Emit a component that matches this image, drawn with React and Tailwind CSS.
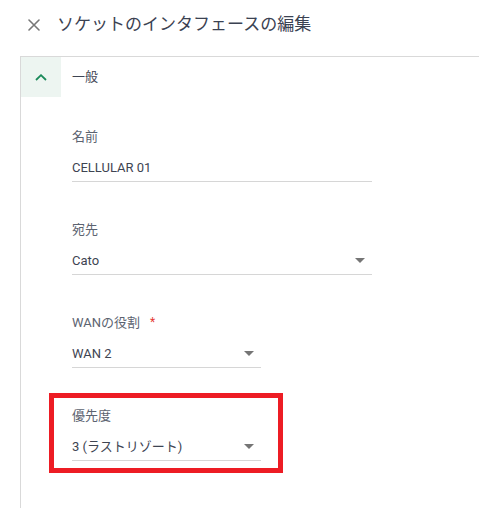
import React from 'react'

const FONT = "font-['Roboto','Noto_Sans_CJK_JP',sans-serif]"

const Caret = () => (
  <svg width="10" height="5" viewBox="0 0 10 5" className="shrink-0">
    <polygon points="0,0 10,0 5,5" fill="#757575" />
  </svg>
)

const Field = ({ label, value, required, select, width = 'w-[300px]' }) => (
  <div className={width}>
    <div className="flex items-center h-[18px] text-[13px] leading-[18px] text-[#5c6370]">
      <span>{label}</span>
      {required && <span className="ml-[10px] -mt-[3px] text-[12px] text-[#e53935]">*</span>}
    </div>
    <div className="flex items-center justify-between pt-[13px] pb-[4px] border-b border-[#d6d6d6]">
      <span className="text-[13px] leading-[18px] text-[#3e4452]">{value}</span>
      {select && <span className="pr-[7px] pb-[1px]"><Caret /></span>}
    </div>
  </div>
)

export default function App() {
  return (
    <div className={`w-[479px] h-[508px] bg-white overflow-hidden flex flex-col ${FONT}`}>
      <div className="flex items-center h-[50px] mb-[6px] pl-[28px]">
        <svg width="12" height="12" viewBox="0 0 12 12" className="shrink-0">
          <path d="M1 1L11 11M11 1L1 11" stroke="#777" strokeWidth="1.6" strokeLinecap="round" />
        </svg>
        <h1 className="ml-[17px] text-[17px] text-[#3b4252]">ソケットのインタフェースの編集</h1>
      </div>

      <div className="flex-1 ml-[20px] border-l border-t border-[#d9d9d9]">
        <div className="flex items-center h-[40px]">
          <div className="w-[40px] h-[40px] bg-[#edf5f1] flex items-center justify-center">
            <svg width="12" height="7" viewBox="0 0 12 7">
              <path d="M1 6L6 1.2L11 6" stroke="#1b8a5a" strokeWidth="1.8" fill="none" />
            </svg>
          </div>
          <span className="ml-[11px] text-[13px] text-[#3e4452]">一般</span>
        </div>

        <div className="flex flex-col pl-[51px] pt-[31px]">
          <Field label="名前" value="CELLULAR 01" />
          <div className="mt-[39px]">
            <Field label="宛先" value="Cato" select />
          </div>
          <div className="mt-[39px]">
            <Field label="WANの役割" value="WAN 2" select required width="w-[189px]" />
          </div>
          <div className="mt-[25px] -ml-[23px] w-[234px] border-[5px] border-[#ed1c24] pl-[18px] pr-[17px] pt-[9px] pb-[7px]">
            <Field label="優先度" value="3 (ラストリゾート)" select width="w-[189px]" />
          </div>
        </div>
      </div>
    </div>
  )
}
